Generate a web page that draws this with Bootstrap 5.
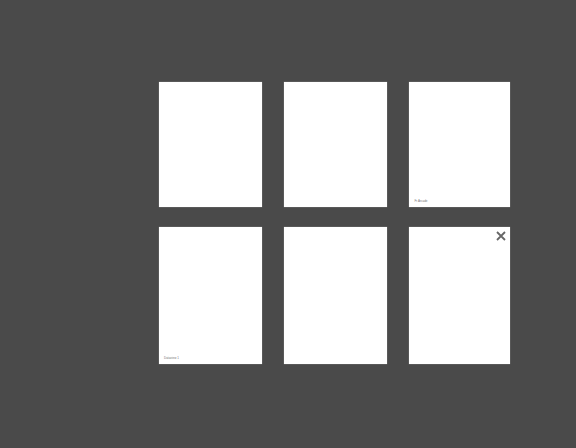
<!DOCTYPE html>
<html lang="en">
<head>
<meta charset="utf-8">
<title>Pages</title>
<link href="https://cdn.jsdelivr.net/npm/bootstrap@5.3.0/dist/css/bootstrap.min.css" rel="stylesheet">
<style>
html, body { height: 100%; margin: 0; background: #4a4a4a; overflow: hidden; }
.sheet-grid {
  display: grid;
  grid-template-columns: 103px 102.5px 101.5px;
  grid-template-rows: 125px 137px;
  column-gap: 22px;
  row-gap: 20px;
  padding: 82px 0 0 159px;
}
.sheet { background: #fff; position: relative; padding: 0 0 4px 5px; box-shadow: 0 0 1px rgba(255,255,255,.5); }
.sheet-inset { padding-left: 6px; }
.sheet-note { font: 3px/4px "Liberation Sans", sans-serif; color: #777; white-space: nowrap; }
.sheet-close { position: absolute; top: 4px; right: 4px; width: 10px; height: 10px; display: block; }
</style>
</head>
<body>
<main class="sheet-grid">
  <div class="sheet"></div>
  <div class="sheet"></div>
  <div class="sheet sheet-inset d-flex align-items-end"><span class="sheet-note">Fr Arcade</span></div>
  <div class="sheet d-flex align-items-end"><span class="sheet-note">Dataview 1</span></div>
  <div class="sheet"></div>
  <div class="sheet">
    <svg class="sheet-close" viewBox="0 0 10 10" aria-label="Close"><path d="M1 1 9 9M9 1 1 9" stroke="#666" stroke-width="1.8" fill="none"/></svg>
  </div>
</main>
<script src="https://cdn.jsdelivr.net/npm/bootstrap@5.3.0/dist/js/bootstrap.bundle.min.js"></script>
</body>
</html>
